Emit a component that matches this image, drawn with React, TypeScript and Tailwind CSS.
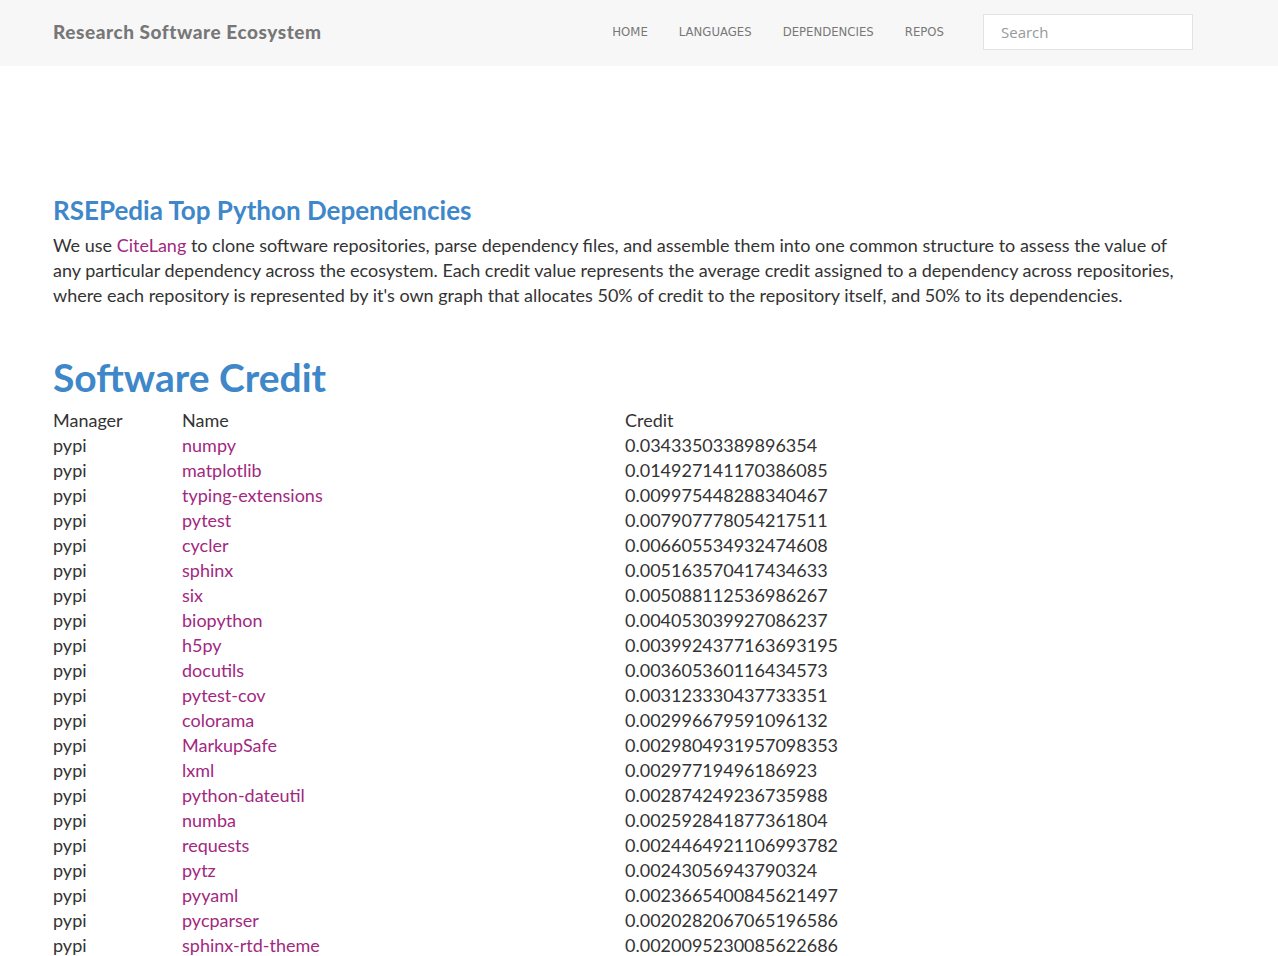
import React from "react";

const rows: [string, string][] = [
  ["numpy", "0.03433503389896354"],
  ["matplotlib", "0.014927141170386085"],
  ["typing-extensions", "0.009975448288340467"],
  ["pytest", "0.007907778054217511"],
  ["cycler", "0.006605534932474608"],
  ["sphinx", "0.005163570417434633"],
  ["six", "0.005088112536986267"],
  ["biopython", "0.004053039927086237"],
  ["h5py", "0.0039924377163693195"],
  ["docutils", "0.003605360116434573"],
  ["pytest-cov", "0.003123330437733351"],
  ["colorama", "0.002996679591096132"],
  ["MarkupSafe", "0.0029804931957098353"],
  ["lxml", "0.00297719496186923"],
  ["python-dateutil", "0.002874249236735988"],
  ["numba", "0.002592841877361804"],
  ["requests", "0.0024464921106993782"],
  ["pytz", "0.00243056943790324"],
  ["pyyaml", "0.0023665400845621497"],
  ["pycparser", "0.0020282067065196586"],
  ["sphinx-rtd-theme", "0.0020095230085622686"],
  ["jinja2", "0.0019827613740366234"],
  ["tqdm", "0.0019141872047313658"],
];

const navItems = ["HOME", "LANGUAGES", "DEPENDENCIES", "REPOS"];

export default function App() {
  return (
    <div className="min-h-screen bg-white text-[#333] font-['Lato',sans-serif]">
      <header className="h-[66px] bg-[#f7f7f7]">
        <div className="ml-[53px] flex h-full w-[1170px] items-center pb-[2px]">
          <a className="text-[19px] font-black tracking-[0.55px] text-[#777]">
            Research Software Ecosystem
          </a>
          <nav className="ml-auto flex items-center">
            <ul className="flex items-center gap-[31px] text-[13px] text-[#777] font-['DejaVu_Sans_Condensed','DejaVu_Sans',sans-serif]">
              {navItems.map((item) => (
                <li key={item}>
                  <a>{item}</a>
                </li>
              ))}
            </ul>
            <input
              type="text"
              placeholder="Search"
              className="ml-[39px] mr-[30px] h-[36px] w-[210px] border border-[#e2e2e2] bg-white px-[17px] text-[15px] placeholder-[#999] outline-none font-['Open_Sans',sans-serif]"
            />
          </nav>
        </div>
      </header>

      <main className="ml-[53px] w-[1170px] pt-[129px] text-[18px] leading-[25px]">
        <h3 className="text-[26px] font-bold leading-[30px] text-[#3e87c9]">
          RSEPedia Top Python Dependencies
        </h3>
        <p className="mt-[8px] w-[1130px]">
          We use <a className="text-[#a2287f]">CiteLang</a> to clone software
          repositories, parse dependency files, and assemble them into one
          common structure to assess the value of any particular dependency
          across the ecosystem. Each credit value represents the average credit
          assigned to a dependency across repositories, where each repository
          is represented by it's own graph that allocates 50% of credit to the
          repository itself, and 50% to its dependencies.
        </p>

        <h1 className="mt-[46px] text-[39px] font-bold leading-[46px] text-[#3e87c9]">
          Software Credit
        </h1>
        <table className="mt-[8px] border-collapse">
          <thead>
            <tr>
              <th className="w-[129px] p-0 text-left font-normal">Manager</th>
              <th className="w-[443px] p-0 text-left font-normal">Name</th>
              <th className="p-0 text-left font-normal">Credit</th>
            </tr>
          </thead>
          <tbody>
            {rows.map(([name, credit]) => (
              <tr key={name}>
                <td className="p-0">pypi</td>
                <td className="p-0">
                  <a className="text-[#a2287f]">{name}</a>
                </td>
                <td className="p-0">{credit}</td>
              </tr>
            ))}
          </tbody>
        </table>
      </main>
    </div>
  );
}
